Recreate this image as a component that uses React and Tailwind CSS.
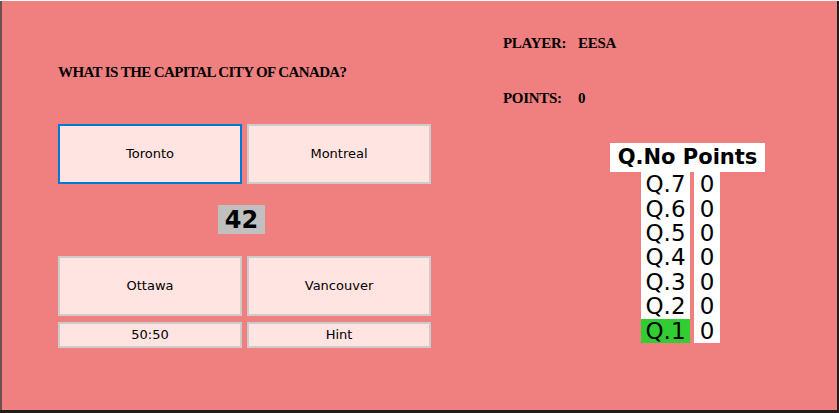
import React from "react";

const answers = ["Toronto", "Montreal", "Ottawa", "Vancouver"];
const rows = ["Q.7", "Q.6", "Q.5", "Q.4", "Q.3", "Q.2", "Q.1"];

const stencil = "font-['Liberation_Serif',serif] font-bold uppercase text-black";

function AnswerButton({ label, active }) {
  return (
    <button
      type="button"
      className={`flex h-[60px] items-center justify-center bg-[#ffe4e1] font-['DejaVu_Sans',sans-serif] text-[13px] text-black ${
        active ? "border-2 border-[#0078d7]" : "border-2 border-[#cccccc]"
      }`}
    >
      {label}
    </button>
  );
}

function Quiz() {
  return (
    <div className="flex w-[440px] flex-col pl-[56px]">
      <h1 className={`${stencil} mt-[61px] text-[15px] leading-[20px] tracking-[-0.6px]`}>
        What is the capital city of Canada?
      </h1>

      <div className="mt-[42px] grid w-[373px] grid-cols-2 gap-x-[5px]">
        <AnswerButton label={answers[0]} active />
        <AnswerButton label={answers[1]} />
      </div>

      <div className="flex w-[373px] justify-center pt-[21px] pb-[22px]">
        <span className="mr-[6px] flex h-[29px] w-[47px] items-center justify-center bg-[#c0c0c0] font-['DejaVu_Sans',sans-serif] text-[24px] font-bold leading-none text-black">
          42
        </span>
      </div>

      <div className="grid w-[373px] grid-cols-2 gap-x-[5px] gap-y-[6px]">
        <AnswerButton label={answers[2]} />
        <AnswerButton label={answers[3]} />
        <button
          type="button"
          className="h-[26px] border-2 border-[#cccccc] bg-[#ffe4e1] font-['DejaVu_Sans',sans-serif] text-[13px] text-black"
        >
          50:50
        </button>
        <button
          type="button"
          className="h-[26px] border-2 border-[#cccccc] bg-[#ffe4e1] font-['DejaVu_Sans',sans-serif] text-[13px] text-black"
        >
          Hint
        </button>
      </div>
    </div>
  );
}

function Scoreboard() {
  return (
    <div className="flex flex-col pl-[61px]">
      <div className={`${stencil} mt-[32px] flex text-[15px] leading-[20px] tracking-[-0.3px]`}>
        <span className="w-[75px]">Player:</span>
        <span>Eesa</span>
      </div>
      <div className={`${stencil} mt-[35px] flex text-[15px] leading-[20px] tracking-[-0.3px]`}>
        <span className="w-[75px]">Points:</span>
        <span>0</span>
      </div>

      <div className="ml-[107px] mt-[35px] flex w-[155px] flex-col items-start">
        <div className="flex h-[29px] w-[155px] items-center justify-center bg-white font-['DejaVu_Sans',sans-serif] text-[21px] font-bold leading-none text-black">
          Q.No Points
        </div>
        <div className="ml-[31px] flex gap-x-[4px]">
          <div className="flex w-[49px] flex-col bg-white">
            {rows.map((q) => (
              <div
                key={q}
                className={`flex h-[24.43px] items-center justify-center overflow-visible font-['DejaVu_Sans',sans-serif] text-[23px] leading-[22px] text-black ${
                  q === "Q.1" ? "bg-[#32cd32]" : ""
                }`}
              >
                {q}
              </div>
            ))}
          </div>
          <div className="flex w-[26px] flex-col bg-white">
            {rows.map((q) => (
              <div
                key={q}
                className="flex h-[24.43px] items-center justify-center font-['DejaVu_Sans',sans-serif] text-[23px] leading-[22px] text-black"
              >
                0
              </div>
            ))}
          </div>
        </div>
      </div>
    </div>
  );
}

export default function App() {
  return (
    <div className="flex h-[413px] w-[839px] flex-col bg-[#1e1e1e]">
      <div className="h-px bg-white" />
      <div className="flex flex-1">
        <div className="w-[2px] bg-[#6b5050]" />
        <div className="flex flex-1 bg-[#f08080]">
          <Quiz />
          <Scoreboard />
        </div>
        <div className="w-[2px] bg-[#1e1e1e]" />
      </div>
      <div className="h-[3px] bg-[#1e1e1e]" />
    </div>
  );
}
